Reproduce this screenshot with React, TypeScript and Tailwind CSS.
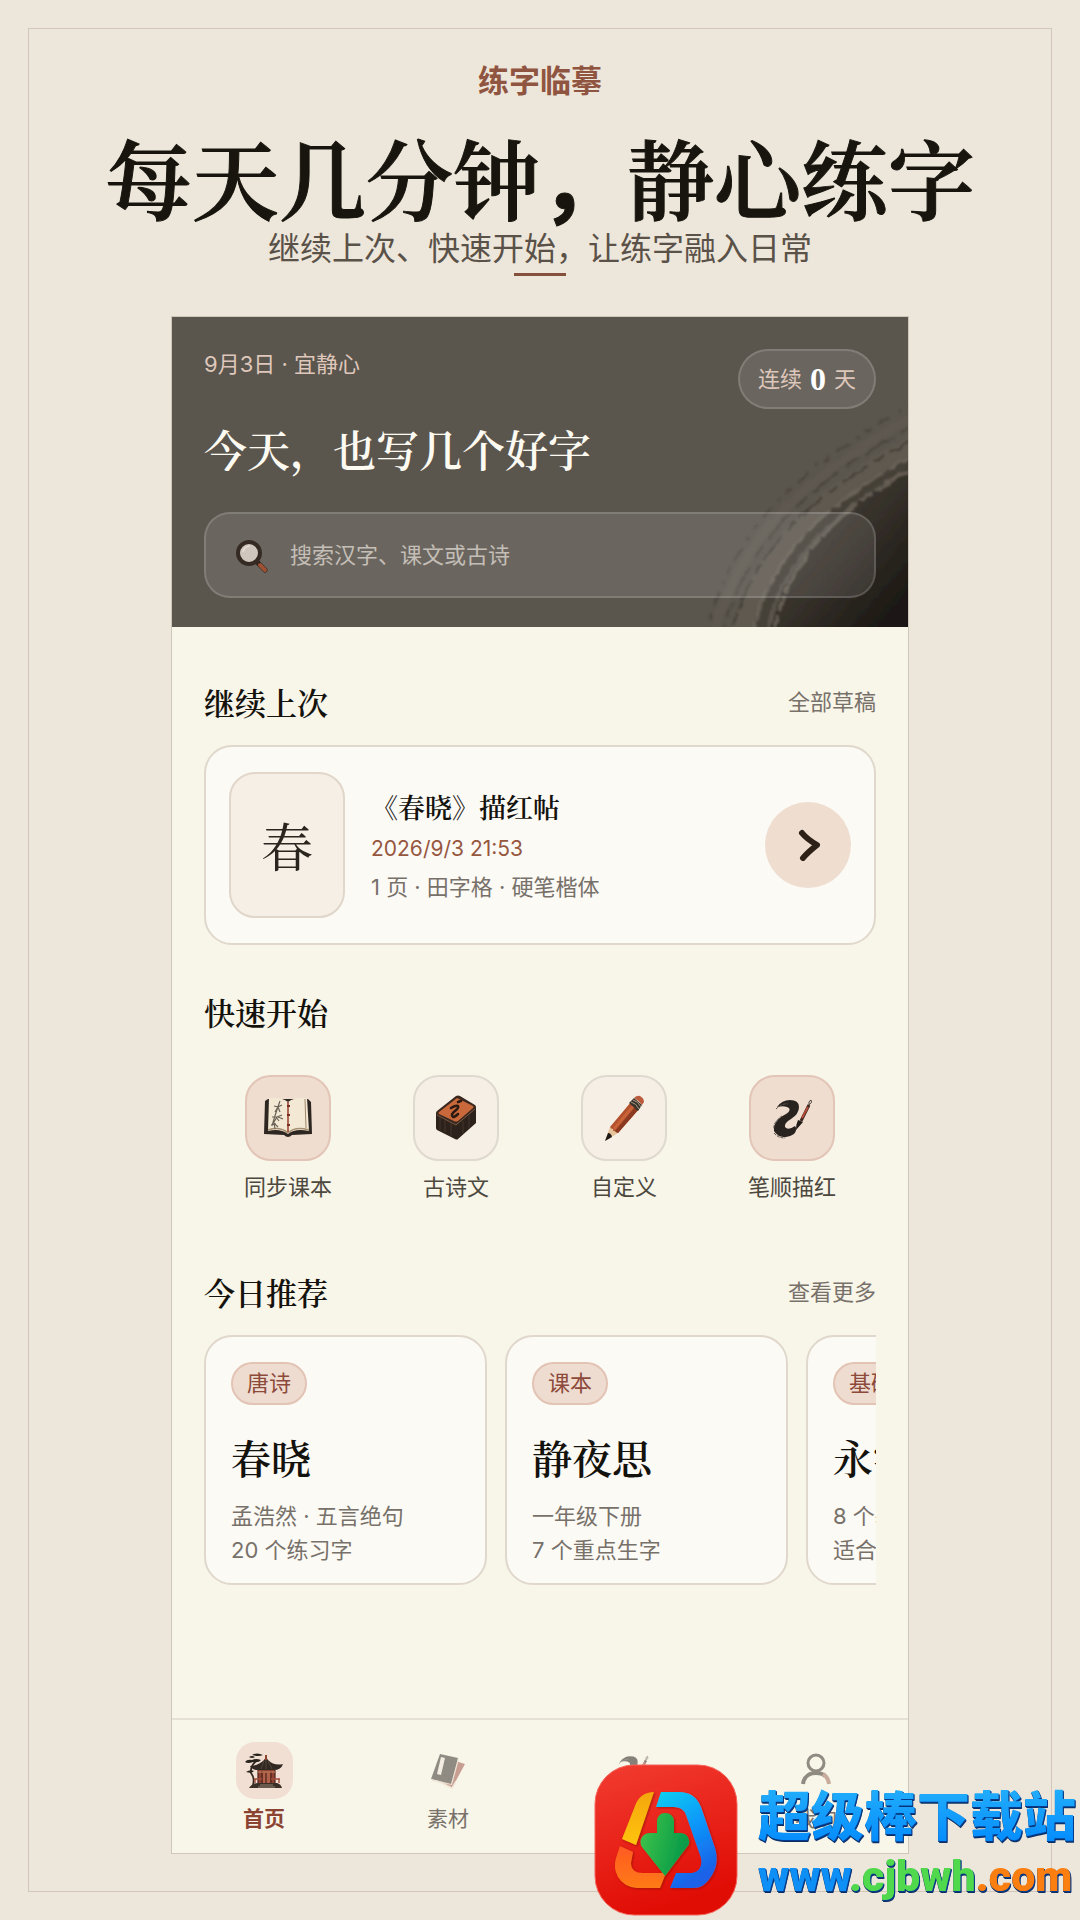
import { useState } from "react";
import clsx from "clsx";

const SERIF = "font-['Noto_Serif_CJK_SC','Noto_Sans_CJK_SC',serif]";

const shortcuts = [
  { label: "同步课本", tinted: true, icon: <BookIcon /> },
  { label: "古诗文", tinted: false, icon: <SealIcon /> },
  { label: "自定义", tinted: false, icon: <PencilIcon /> },
  { label: "笔顺描红", tinted: true, icon: <BrushIcon className="size-11" /> },
];

const picks = [
  { tag: "唐诗", title: "春晓", lines: ["孟浩然 · 五言绝句", "20 个练习字"] },
  { tag: "课本", title: "静夜思", lines: ["一年级下册", "7 个重点生字"] },
  { tag: "基础", title: "永字八法", lines: ["8 个基本笔画", "适合初学者"] },
];

const tabs = [
  { label: "首页", icon: <PavilionIcon /> },
  { label: "素材", icon: <AlbumsIcon /> },
  { label: "练习", icon: <BrushIcon className="size-9" /> },
  { label: "我的", icon: <PersonIcon /> },
];

export default function App() {
  return (
    <div className="relative flex min-h-screen flex-col overflow-hidden bg-[#ede6da] p-7 font-['Inter','Noto_Sans_CJK_SC',sans-serif]">
      <main className="flex flex-1 flex-col items-center border border-[#d3c6b8] pb-[37px]">
        <header className="flex flex-col items-center text-center">
          <p className="mt-8 text-[31px] leading-10 font-bold text-[#8f5540]">练字临摹</p>
          <h1
            className={`${SERIF} mt-6 h-[104px] text-[87px] leading-[104px] font-semibold text-[#17150e] [-webkit-text-stroke:1px_#17150e]`}
          >
            每天几分钟
            <span className="font-['Noto_Sans_CJK_SC',sans-serif] leading-none">，</span>
            静心练字
          </h1>
          <p className="text-[32px] leading-10 text-[#5a5148]">
            继续上次、快速开始，让练字融入日常
          </p>
          <span className="mt-1 h-[3px] w-[52px] bg-[#85503c]" />
        </header>

        <div className="mt-10 flex w-full max-w-[738px] flex-1 flex-col border border-[#cfc8ba] bg-[#f8f5e9]">
          <Hero />
          <div className="flex-1 px-8">
            <SectionHeading title="继续上次" action="全部草稿" className="mt-13" />
            <ResumeCard />
            <SectionHeading title="快速开始" className="mt-11" />
            <div className="mt-10 grid grid-cols-4">
              {shortcuts.map((s) => (
                <button key={s.label} type="button" className="flex flex-col items-center">
                  <span
                    className={clsx(
                      "flex size-[86px] items-center justify-center rounded-[26px] border-2",
                      s.tinted
                        ? "border-[#e2c5b6] bg-[#efddd0]"
                        : "border-[#dfd9cf] bg-[#f6efe6]",
                    )}
                  >
                    {s.icon}
                  </span>
                  <span className="mt-[10px] text-[22px] leading-8 text-[#4d483e]">{s.label}</span>
                </button>
              ))}
            </div>
            <SectionHeading title="今日推荐" action="查看更多" className="mt-[66px]" />
            <div className="mt-5 flex gap-[18px] overflow-hidden">
              {picks.map((p) => (
                <article
                  key={p.title}
                  className="h-[250px] w-[283px] shrink-0 rounded-[28px] border-2 border-[#e0d8cc] bg-[#fcfaf5] px-[25px] pt-[25px] text-[22px] text-[#77716a]"
                >
                  <span className="inline-flex h-[43px] items-center rounded-full border-2 border-[#e2c3b4] bg-[#efdcd1] px-[14px] text-[#8c4a3a]">
                    {p.tag}
                  </span>
                  <h3 className={`${SERIF} mt-[26px] text-[40px] leading-[52px] font-semibold text-[#14120d]`}>
                    {p.title}
                  </h3>
                  <p className="mt-4 leading-[34px] whitespace-nowrap">
                    {p.lines[0]}
                    <br />
                    {p.lines[1]}
                  </p>
                </article>
              ))}
            </div>
          </div>
          <TabBar />
        </div>
      </main>
      <SiteBadge />
    </div>
  );
}

function Hero() {
  return (
    <section className="relative overflow-hidden bg-[#5a554d] px-8 pt-8 pb-[29px]">
      <InkStroke />
      <div className="relative">
        <div className="flex items-start justify-between text-[22px] text-[#dfc7bb]">
          <p className="leading-[30px]">9月3日 · 宜静心</p>
          <p className="flex h-[60px] items-center gap-2 rounded-full border-2 border-white/15 bg-white/10 px-[18px]">
            连续
            <strong className="font-['Liberation_Serif',serif] text-[32px] leading-8 text-white">0</strong>
            天
          </p>
        </div>
        <h2 className={`${SERIF} mt-[10px] text-[43px] leading-[60px] font-semibold text-[#fdfaf2]`}>
          今天，也写几个好字
        </h2>
        <label className="mt-[33px] flex h-[86px] items-center gap-5 rounded-[26px] border-2 border-white/15 bg-white/10 px-7">
          <MagnifierIcon />
          <input
            type="search"
            aria-label="搜索"
            placeholder="搜索汉字、课文或古诗"
            className="min-w-0 flex-1 bg-transparent text-[22px] leading-8 text-white outline-none placeholder:text-[#c4beb7]"
          />
        </label>
      </div>
    </section>
  );
}

function SectionHeading({
  title,
  action,
  className,
}: {
  title: string;
  action?: string;
  className?: string;
}) {
  return (
    <div className={clsx("flex items-center justify-between", className)}>
      <h2 className={`${SERIF} text-[31px] leading-[46px] font-semibold text-[#14120d]`}>{title}</h2>
      {action ? (
        <a href="#" className="text-[22px] leading-8 text-[#77716a]">
          {action}
        </a>
      ) : null}
    </div>
  );
}

function ResumeCard() {
  return (
    <article className="mt-5 flex items-center rounded-[28px] border-2 border-[#e0d8cc] bg-[#fcfaf5] px-[23px] py-[25px]">
      <div
        className={`${SERIF} flex h-[146px] w-[116px] items-center justify-center rounded-[26px] border-2 border-[#e0d6ca] bg-[#f6efe6] text-[52px] text-[#2a251e]`}
      >
        春
      </div>
      <div className="ml-[26px] flex-1 pt-1 text-[22px] text-[#77716a]">
        <h3 className={`${SERIF} text-[27px] leading-10 font-semibold text-[#14120d]`}>《春晓》描红帖</h3>
        <p className="mt-1 text-[21px] leading-9 text-[#96573f]">2026/9/3 21:53</p>
        <p className="leading-10">1 页 · 田字格 · 硬笔楷体</p>
      </div>
      <button
        type="button"
        aria-label="继续"
        className="flex size-[86px] items-center justify-center rounded-full bg-[#efddd0]"
      >
        <svg viewBox="0 0 24 32" className="ml-1 h-8 w-6" fill="none" aria-hidden="true">
          <path
            d="M4 4C8 9 14 13 19 16C14 20 9 24 5 29"
            stroke="#2d2017"
            strokeWidth="6"
            strokeLinecap="round"
            strokeLinejoin="round"
          />
        </svg>
      </button>
    </article>
  );
}

function TabBar() {
  const [active, setActive] = useState("首页");

  return (
    <nav className="grid grid-cols-4 border-t-2 border-[#e6e1d5] pt-[22px] pb-[18px]">
      {tabs.map((t) => {
        const on = t.label === active;
        return (
          <button
            key={t.label}
            type="button"
            aria-current={on ? "page" : undefined}
            onClick={() => setActive(t.label)}
            className="flex flex-col items-center"
          >
            <span
              className={clsx(
                "flex size-[57px] items-center justify-center rounded-[19px]",
                on ? "bg-[#f1dfd3]" : "opacity-55",
              )}
            >
              {t.icon}
            </span>
            <span
              className={clsx(
                "mt-1 text-[21px] leading-8",
                on ? "font-bold text-[#8c4432]" : "text-[#77716a]",
              )}
            >
              {t.label}
            </span>
          </button>
        );
      })}
    </nav>
  );
}

/* ---------- artwork ---------- */

function InkStroke() {
  return (
    <svg
      viewBox="0 0 738 310"
      preserveAspectRatio="xMaxYMax slice"
      className="absolute inset-0 h-full w-full"
      fill="none"
      aria-hidden="true"
    >
      <defs>
        <linearGradient id="ink" x1="620" y1="200" x2="725" y2="290" gradientUnits="userSpaceOnUse">
          <stop offset="0" stopColor="#453f38" />
          <stop offset="0.5" stopColor="#342f29" />
          <stop offset="1" stopColor="#1d1914" />
        </linearGradient>
        <filter id="rough" x="-10%" y="-10%" width="120%" height="120%">
          <feTurbulence type="fractalNoise" baseFrequency="0.12" numOctaves="3" seed="4" />
          <feDisplacementMap in="SourceGraphic" scale="6" xChannelSelector="R" yChannelSelector="G" />
          <feGaussianBlur stdDeviation="0.8" />
        </filter>
      </defs>
      <g filter="url(#rough)">
        <path d="M750 144C690 178 610 235 598 325H760Z" fill="url(#ink)" />
        <path d="M745 128C670 170 590 225 571 325" stroke="#625c53" strokeWidth="22" opacity="0.5" />
        <path d="M745 142C680 178 605 228 588 325" stroke="#3d372f" strokeWidth="9" opacity="0.7" />
        <path d="M745 150C690 180 615 230 602 325" stroke="#665f55" strokeWidth="3" strokeDasharray="46 4 14 5" />
        <path d="M745 138C680 172 596 228 580 325" stroke="#6a6359" strokeWidth="3" strokeDasharray="30 6 60 5" />
        <path d="M745 122C670 162 580 218 560 325" stroke="#453f37" strokeWidth="2" strokeDasharray="30 5 12 8" />
        <path d="M745 108C660 154 575 212 551 325" stroke="#4a443c" strokeWidth="2" strokeDasharray="16 9 34 6" />
        <path d="M745 98C655 150 568 208 542 325" stroke="#635d54" strokeWidth="9" opacity="0.4" />
        <path d="M745 86C640 145 560 205 534 325" stroke="#49433b" strokeWidth="2" strokeDasharray="8 7 3 10 14 8" />
      </g>
    </svg>
  );
}

function MagnifierIcon() {
  return (
    <svg viewBox="0 0 36 36" className="size-9 shrink-0" aria-hidden="true">
      <path d="M23 25L31 33" stroke="#2f251e" strokeWidth="5" strokeLinecap="round" />
      <path d="M26 28L31 33" stroke="#9d5034" strokeWidth="4" strokeLinecap="round" />
      <circle cx="15" cy="16" r="11" fill="#cfc6bd" stroke="#352b24" strokeWidth="4" />
      <path d="M9 15C10 11 12 9 16 9" stroke="#e6dfd8" strokeWidth="1.5" fill="none" />
    </svg>
  );
}

function BookIcon() {
  return (
    <svg viewBox="0 0 50 42" className="h-[42px] w-[50px]" aria-hidden="true">
      <path d="M2 4L5 2H45L48 5L49 37L29 38Q25 42 21 38L1 37Z" fill="#2e2621" />
      <path d="M6 1Q18 0 25 5Q32 0 44 1L46 34Q32 31 25 37Q17 31 5 34Z" fill="#f3e8d3" />
      <path d="M5 33Q17 29 25 36Q32 29 46 33" stroke="#a48d70" strokeWidth="1.5" fill="none" />
      <path d="M42 2L43 31" stroke="#9d866c" strokeWidth="1" />
      <path d="M25 5V35" stroke="#993d2b" strokeWidth="1.5" />
      <path d="M24 9H27M24 18H27M24 28H27" stroke="#7a2d21" strokeWidth="2" />
      <path
        d="M9 29Q12 18 17 4M11 9L15 10L17 15M19 8L15 10L12 15M9 20L13 20L16 24M19 18L14 20L11 25M20 22L15 20M8 28L13 27M15 30L11 26L12 32"
        stroke="#6b6358"
        strokeWidth="1.2"
        fill="none"
      />
    </svg>
  );
}

function SealIcon() {
  return (
    <svg viewBox="0 0 44 48" className="h-12 w-11" aria-hidden="true">
      <path d="M2 19L23 30L42 13V29L24 45Q23 46 21 45L3 36Q2 35 2 34Z" fill="#2c221b" />
      <path d="M22 2Q24 1 26 2L41 11Q43 13 41 15L25 29Q23 31 20 29L3 21Q1 19 3 17Z" fill="#3a281e" />
      <path d="M23 4L39 12Q40 13 39 14L24 27Q22 28 20 27L5 20Q4 19 5 18Z" fill="#c8683b" />
      <path d="M24 8L27 7" stroke="#2a1a12" strokeWidth="2.5" strokeLinecap="round" />
      <path d="M17 14Q22 11 24 12Q25 14 21 17Q16 21 19 23Q21 23 24 20" stroke="#2a1a12" strokeWidth="2.5" strokeLinecap="round" fill="none" />
      <path d="M6 23V36M11 26V38M17 29V42M29 27V40M35 21V35" stroke="#4a3b30" strokeWidth="0.8" />
      <path d="M3 21L22 31L41 15" stroke="#8a654b" strokeWidth="0.8" fill="none" />
    </svg>
  );
}

function PencilIcon() {
  return (
    <svg viewBox="0 0 44 48" className="h-12 w-11" aria-hidden="true">
      <path d="M3 47L8 33L16 39Z" fill="#e5c39b" />
      <path d="M3 47L6 39Q9 39 10 43Z" fill="#1e1a17" />
      <path d="M8 33L29 8L37 15L16 39Q14 39 13 37Q11 38 11 35Q9 35 8 33Z" fill="#b3502d" />
      <path d="M11 34L31 10L33 12L13 36Z" fill="#c96439" />
      <path d="M13 37L34 12L37 15L16 39Z" fill="#8a3a20" />
      <path d="M27 9L32 4L40 11L36 17Z" fill="#3a332c" />
      <path d="M29 8Q34 9 37 15M31 6Q36 7 39 13" stroke="#a99c83" strokeWidth="1" fill="none" />
      <path d="M32 4Q35 1 38 2Q42 4 42 8L40 11Q36 6 32 4Z" fill="#bb5c3c" />
    </svg>
  );
}

function BrushIcon({ className }: { className?: string }) {
  return (
    <svg viewBox="0 0 44 44" className={className} fill="none" aria-hidden="true">
      <path
        d="M7 11Q12 4 20 4Q29 4 29 11Q29 18 21 23Q14 27 15 31Q18 35 25 30Q28 33 24 38Q17 43 9 40Q1 35 5 28Q8 22 16 18Q21 15 19 12Q15 9 7 11Z"
        fill="#29231f"
      />
      <path d="M6 13Q12 7 18 8M4 37Q8 42 15 42M12 20Q3 26 4 33" stroke="#5e554d" strokeWidth="1" strokeDasharray="3 1" />
      <path d="M28 24L33 26L26 34Q26 28 28 24Z" fill="#201a17" />
      <path d="M31 25L39 9" stroke="#3a251f" strokeWidth="3" />
      <path d="M32 22L38 11" stroke="#b24b38" strokeWidth="2" />
      <path d="M39 9Q38 5 41 4Q43 6 39 9Z" stroke="#4d4038" strokeWidth="1" />
    </svg>
  );
}

function PavilionIcon() {
  return (
    <svg viewBox="0 0 40 38" className="h-[38px] w-10" fill="none" aria-hidden="true">
      <path d="M9 33Q11 26 7 21Q6 15 12 9" stroke="#33271f" strokeWidth="1.8" />
      <path
        d="M1 10Q3 7 8 8Q12 6 17 8Q15 11 9 10Q4 12 1 10ZM8 3Q13 0 19 3Q15 5 8 3ZM2 20Q6 17 10 19Q8 22 2 20ZM5 5Q8 3 11 5Q8 7 5 5Z"
        fill="#28241d"
      />
      <path d="M20 8L22 5L24 8Q30 14 39 12Q37 18 30 18H14Q8 18 6 14Q14 14 20 8Z" fill="#302821" />
      <path d="M20 9L17 17M24 9L28 17M22 8V17" stroke="#5a4e43" strokeWidth="0.8" />
      <path d="M22 3V8" stroke="#8f4130" strokeWidth="2" />
      <path d="M14 18H31V31H14Z" fill="#8f4332" />
      <path d="M19 21H26V31H19Z" fill="#b0614a" />
      <path d="M14 18V31M18 19V31M22 21V31M27 19V31M31 18V31" stroke="#4d231a" strokeWidth="1.2" />
      <path d="M14 20H31" stroke="#d58e67" strokeWidth="1" />
      <path d="M10 27H18M27 27H36M11 27V31M35 27V31" stroke="#a34f3c" strokeWidth="1.4" />
      <path d="M5 36Q8 31 14 31H33Q37 32 38 36Z" fill="#3a3028" />
      <path d="M16 33H29M14 35H31" stroke="#958372" strokeWidth="1" />
    </svg>
  );
}

function AlbumsIcon() {
  return (
    <svg viewBox="0 0 36 36" className="size-9" aria-hidden="true">
      <path d="M16 5L35 11L22 35L9 29Z" fill="#a2584c" />
      <path d="M10 29L22 35L26 28" stroke="#e8d9c5" strokeWidth="1.5" fill="none" />
      <path d="M10 1L28 5L22 31L1 26Z" fill="#3b3630" />
      <path d="M1 26L21 31L28 5L29 6L22 32L2 28Z" fill="#e3d7c3" />
      <path d="M11 4L15 5L11 22L7 21Z" fill="#efe9db" />
    </svg>
  );
}

function PersonIcon() {
  return (
    <svg viewBox="0 0 32 36" className="h-9 w-8" fill="none" aria-hidden="true">
      <circle cx="16" cy="10" r="8" stroke="#3b3630" strokeWidth="3" />
      <path d="M3 31C4 23 10 20 16 20C20 20 23 21 25 23" stroke="#3b3630" strokeWidth="4" />
      <path d="M23 21Q28 24 29 31" stroke="#a0705c" strokeWidth="4" />
    </svg>
  );
}

/* Download site badge floating over the bottom right corner. */
function SiteBadge() {
  return (
    <aside className="absolute right-1 bottom-1 flex items-center gap-5">
      <svg viewBox="0 0 144 152" className="h-[152px] w-36" aria-hidden="true">
        <defs>
          <linearGradient id="tile" x1="0" y1="0" x2="0.3" y2="1">
            <stop offset="0" stopColor="#f23c31" />
            <stop offset="1" stopColor="#e00d05" />
          </linearGradient>
          <linearGradient id="blue" x1="0" y1="0" x2="0.4" y2="1">
            <stop offset="0" stopColor="#08d0f0" />
            <stop offset="0.5" stopColor="#0b98fa" />
            <stop offset="1" stopColor="#1a62e8" />
          </linearGradient>
          <linearGradient id="green" x1="0" y1="0" x2="1" y2="0.3">
            <stop offset="0" stopColor="#43c54b" />
            <stop offset="1" stopColor="#079a48" />
          </linearGradient>
          <linearGradient id="amber" x1="0" y1="0" x2="0" y2="1">
            <stop offset="0" stopColor="#f4a60d" />
            <stop offset="1" stopColor="#ffc40f" />
          </linearGradient>
          <linearGradient id="orange" x1="0" y1="0" x2="0" y2="1">
            <stop offset="0" stopColor="#ff5b22" />
            <stop offset="1" stopColor="#ff7a17" />
          </linearGradient>
          <filter id="lift">
            <feDropShadow dx="1" dy="1" stdDeviation="1" floodColor="#8c0904" floodOpacity="0.7" />
          </filter>
        </defs>
        <rect x="1" y="1" width="142" height="150" rx="39" fill="url(#tile)" stroke="#f4645a" strokeWidth="1" />
        <g filter="url(#lift)">
          <path d="M60 28L42 81L28 75L41 42Q46 28 60 28Z" fill="url(#amber)" />
          <path d="M67 28H85Q101 28 107 43L121 84Q126 101 116 114Q110 124 99 124H76L82 109H98Q109 107 107 94L92 51Q89 43 80 43H62Z" fill="url(#blue)" />
          <path d="M26 82L39 88L37 99Q37 109 49 109H72L66 124H43Q30 123 24 113Q19 104 22 94Z" fill="url(#orange)" />
          <path d="M63 57Q64 49 71 49Q79 49 80 57V69H87Q94 70 95 76Q96 80 93 83L71 112L48 83Q45 78 48 73Q51 69 56 69H63Z" fill="url(#green)" />
        </g>
      </svg>
      <div className="pt-3 [filter:drop-shadow(1px_1px_0_#063a8c)_drop-shadow(0_1px_0_#0b2f63)]">
        <p className="bg-gradient-to-b from-[#22aefb] to-[#0489fd] bg-clip-text text-[53px] leading-[60px] font-black whitespace-nowrap text-transparent">
          超级棒下载站
        </p>
        <a
          href="#"
          className="block font-['Roboto',sans-serif] text-[43px] leading-[58px] font-black whitespace-nowrap"
        >
          <span className="text-[#0d8ff5]">www</span>
          <span className="text-[#50d94c]">.cjbwh</span>
          <span className="text-[#fb7f10]">.com</span>
        </a>
      </div>
    </aside>
  );
}
